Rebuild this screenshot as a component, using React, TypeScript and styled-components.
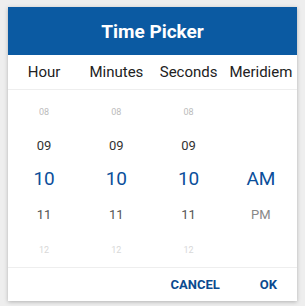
import styled, { createGlobalStyle } from "styled-components";

const GlobalStyle = createGlobalStyle`
  body {
    margin: 0;
    background: #eeeeee;
    font-family: Roboto, "Liberation Sans", sans-serif;
  }
`;

const Page = styled.div`
  padding: 7px 8px;
`;

const Dialog = styled.div`
  width: 289px;
  background: #fff;
  box-shadow: 0 1px 4px rgba(0, 0, 0, 0.25);
  display: flex;
  flex-direction: column;
`;

const Header = styled.div`
  height: 48px;
  background: #0b5aa2;
  color: #fff;
  font-size: 19px;
  font-weight: 700;
  display: flex;
  align-items: center;
  justify-content: center;
`;

const Labels = styled.div`
  height: 34px;
  display: grid;
  grid-template-columns: repeat(4, 1fr);
  align-items: center;
  border-bottom: 1px solid #eeeeee;
`;

const Label = styled.div`
  text-align: center;
  font-size: 15px;
  color: #222;
`;

const Wheels = styled.div`
  display: grid;
  grid-template-columns: repeat(4, 1fr);
  padding-top: 5px;
  height: 172px;
`;

const Column = styled.div`
  display: flex;
  flex-direction: column;
`;

const levels = {
  far: { size: 9, color: "#bbbbbb", height: 34 },
  near: { size: 13, color: "#333333", height: 32 },
  selected: { size: 19, color: "#0b4f9b", height: 34 },
  after: { size: 13, color: "#555555", height: 38 },
  faint: { size: 9, color: "#d8d8d8", height: 34 },
  meridiem: { size: 13, color: "#888888", height: 38 },
};

type Level = keyof typeof levels;

const Item = styled.div<{ $level: Level }>`
  height: ${(p) => levels[p.$level].height}px;
  display: flex;
  align-items: center;
  justify-content: center;
  font-size: ${(p) => levels[p.$level].size}px;
  color: ${(p) => levels[p.$level].color};
`;

const Footer = styled.div`
  height: 33px;
  border-top: 1px solid #eeeeee;
  display: flex;
  justify-content: flex-end;
  align-items: center;
`;

const Button = styled.button`
  background: none;
  border: none;
  padding: 0 20px;
  height: 100%;
  font-family: inherit;
  font-size: 13px;
  font-weight: 700;
  color: #0b4a8f;
  cursor: pointer;
`;

const numberLevels: Level[] = ["far", "near", "selected", "after", "faint"];
const numbers = ["08", "09", "10", "11", "12"];

function NumberColumn() {
  return (
    <Column>
      {numbers.map((n, i) => (
        <Item key={n} $level={numberLevels[i]}>
          {n}
        </Item>
      ))}
    </Column>
  );
}

export default function App() {
  return (
    <Page>
      <GlobalStyle />
      <Dialog>
        <Header>Time Picker</Header>
        <Labels>
          <Label>Hour</Label>
          <Label>Minutes</Label>
          <Label>Seconds</Label>
          <Label>Meridiem</Label>
        </Labels>
        <Wheels>
          <NumberColumn />
          <NumberColumn />
          <NumberColumn />
          <Column>
            <Item $level="far" />
            <Item $level="near" />
            <Item $level="selected">AM</Item>
            <Item $level="meridiem">PM</Item>
          </Column>
        </Wheels>
        <Footer>
          <Button>CANCEL</Button>
          <Button>OK</Button>
        </Footer>
      </Dialog>
    </Page>
  );
}
